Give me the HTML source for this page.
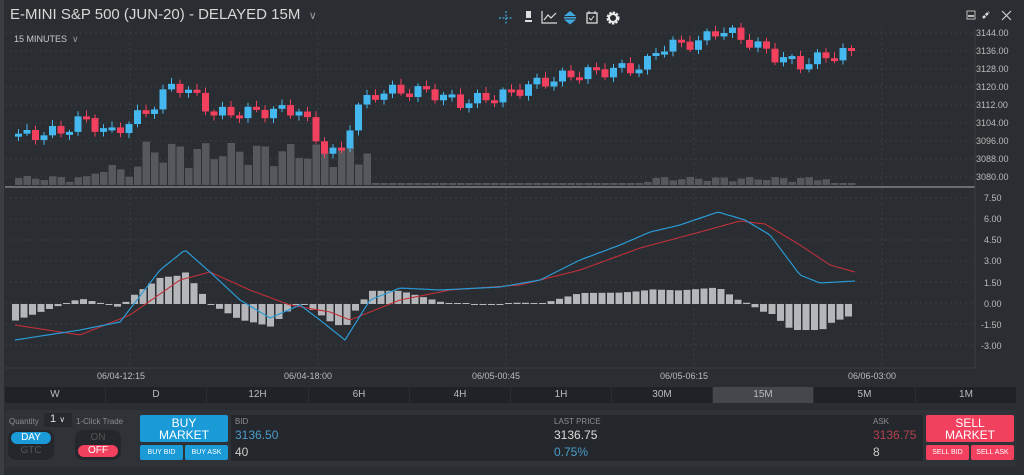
<!DOCTYPE html>
<html><head><meta charset="utf-8"><style>
*{margin:0;padding:0;box-sizing:border-box}
body{width:1024px;height:475px;background:#2a2d31;font-family:"Liberation Sans",sans-serif;color:#ccc;position:relative;overflow:hidden}
.a{position:absolute}
.tf{position:absolute;top:387px;height:16px;background:#1f2226;color:#bbb;font-size:10px;text-align:center;line-height:16px}
.btn{position:absolute;border-radius:2px;color:#fff;text-align:center}
.lbl{font-size:8px;color:#8a8d92}
</style></head><body>
<div class="a" style="left:0;top:0;width:4px;height:475px;background:#3a3d42"></div>
<div class="a" style="left:10px;top:6px;font-size:15px;color:#d8d8d8">E-MINI S&amp;P 500 (JUN-20) - DELAYED 15M &nbsp;<span style="font-size:11px;color:#999">∨</span></div>
<div class="a" style="left:14px;top:34px;font-size:9px;color:#ccc">15 MINUTES &nbsp;<span style="color:#999">∨</span></div>
<svg class="a" style="left:0;top:0" width="1024" height="475" id="s">
<g stroke="#3fa9e0" fill="none" stroke-width="1.2"><path d="M499 18h14M506 11v14" stroke-dasharray="2 1.5"/></g>
<g fill="#ddd"><rect x="526" y="11" width="5" height="7"/><rect x="525" y="20" width="7" height="2"/></g>
<path d="M542 11v12h15M544 20l4-5 3 3 5-5" stroke="#ddd" fill="none" stroke-width="1.2"/>
<g fill="#3fa9e0"><path d="M564 16l6-5 6 5z"/><rect x="564" y="17" width="12" height="1.5"/><path d="M564 19.5l6 5 6-5z"/></g>
<rect x="587" y="13" width="10" height="10" fill="none" stroke="#ddd" stroke-width="1.3"/><path d="M589 11v3M595 11v3M589 18l2 2 3-4" stroke="#ddd" fill="none"/>
<circle cx="613" cy="18" r="5" fill="none" stroke="#eee" stroke-width="3" stroke-dasharray="2.2 1.1"/><circle cx="613" cy="18" r="4" fill="none" stroke="#eee" stroke-width="2"/>
<rect x="967" y="11" width="8" height="8" fill="none" stroke="#bbb"/><rect x="968" y="15" width="6" height="2" fill="#bbb"/>
<path d="M983 18l6-6" stroke="#ddd" stroke-width="2.5" stroke-dasharray="3 1"/>
<path d="M1002 11l9 9M1011 11l-9 9" stroke="#ccc" stroke-width="1.2"/>
<g id="grid" stroke="#3a3d42" stroke-dasharray="2 3"></g>
<line x1="5" y1="187" x2="975" y2="187" stroke="#6a6d72" stroke-width="2"/>
<line x1="5" y1="368" x2="975" y2="368" stroke="#3a3d42"/>
<line x1="975" y1="28" x2="975" y2="368" stroke="#3a3d42"/>
<g id="vol" fill="#55585c"></g>
<g id="cdl"></g>
<g id="hist" fill="#b4b6b9"></g>
<polyline id="sig" fill="none" stroke="#c0303a" stroke-width="1.1"/>
<polyline id="mac" fill="none" stroke="#2a9bd6" stroke-width="1.2"/>
<g font-size="9" fill="#bbb" font-family="Liberation Sans">
<text x="976" y="36">3144.00</text><text x="976" y="54">3136.00</text><text x="976" y="72">3128.00</text><text x="976" y="90">3120.00</text><text x="976" y="108">3112.00</text><text x="976" y="126">3104.00</text><text x="976" y="144">3096.00</text><text x="976" y="162">3088.00</text><text x="976" y="180">3080.00</text>
<text x="984" y="201">7.50</text><text x="984" y="222">6.00</text><text x="984" y="243">4.50</text><text x="984" y="264">3.00</text><text x="984" y="286">1.50</text><text x="984" y="307">0.00</text><text x="981" y="328">-1.50</text><text x="981" y="349">-3.00</text>
<text x="97" y="379">06/04-12:15</text><text x="284" y="379">06/04-18:00</text><text x="472" y="379">06/05-00:45</text><text x="660" y="379">06/05-06:15</text><text x="848" y="379">06/06-03:00</text>
</g>
</svg>
<div class="tf" style="left:5px;width:100px">W</div>
<div class="tf" style="left:106px;width:100px">D</div>
<div class="tf" style="left:207px;width:101px">12H</div>
<div class="tf" style="left:309px;width:100px">6H</div>
<div class="tf" style="left:410px;width:100px">4H</div>
<div class="tf" style="left:511px;width:100px">1H</div>
<div class="tf" style="left:612px;width:100px">30M</div>
<div class="tf" style="left:713px;width:100px;background:#44474c">15M</div>
<div class="tf" style="left:814px;width:101px">5M</div>
<div class="tf" style="left:916px;width:100px">1M</div>
<div class="a" style="left:5px;top:410px;width:1011px;height:57px;background:#2f3237"></div>
<div class="a lbl" style="left:9px;top:417px">Quantity</div>
<div class="a" style="left:44px;top:413px;width:28px;height:14px;background:#25282c;font-size:11px;color:#ddd;padding-left:6px">1 <span style="font-size:8px">∨</span></div>
<div class="a lbl" style="left:76px;top:417px">1-Click Trade</div>
<div class="a" style="left:8px;top:430px;width:46px;height:30px;background:#24272b;border-radius:8px"></div>
<div class="a" style="left:11px;top:432px;width:40px;height:12px;background:#1b9ad8;border-radius:6px;font-size:10px;color:#fff;text-align:center;line-height:12px">DAY</div>
<div class="a" style="left:11px;top:445px;width:40px;height:12px;font-size:10px;color:#555;text-align:center;line-height:12px">GTC</div>
<div class="a" style="left:75px;top:430px;width:46px;height:30px;background:#24272b;border-radius:8px"></div>
<div class="a" style="left:78px;top:432px;width:40px;height:12px;font-size:10px;color:#555;text-align:center;line-height:12px">ON</div>
<div class="a" style="left:78px;top:445px;width:40px;height:12px;background:#f2405f;border-radius:6px;font-size:10px;color:#fff;text-align:center;line-height:12px">OFF</div>
<div class="btn" style="left:140px;top:415px;width:88px;height:27px;background:#1b9ad8;font-size:12px;line-height:12px;padding-top:2px">BUY<br>MARKET</div>
<div class="btn" style="left:140px;top:445px;width:43px;height:15px;background:#1b9ad8;font-size:7px;line-height:15px">BUY BID</div>
<div class="btn" style="left:185px;top:445px;width:43px;height:15px;background:#1b9ad8;font-size:7px;line-height:15px">BUY ASK</div>
<div class="a" style="left:231px;top:415px;width:692px;height:46px;background:#24272b"></div>
<div class="a lbl" style="left:235px;top:417px">BID</div>
<div class="a" style="left:235px;top:428px;font-size:12px;color:#4a9ccc">3136.50</div>
<div class="a" style="left:235px;top:445px;font-size:12px;color:#ccc">40</div>
<div class="a lbl" style="left:554px;top:417px">LAST PRICE</div>
<div class="a" style="left:554px;top:428px;font-size:12px;color:#ddd">3136.75</div>
<div class="a" style="left:554px;top:445px;font-size:12px;color:#4a9ccc">0.75%</div>
<div class="a lbl" style="left:873px;top:417px">ASK</div>
<div class="a" style="left:873px;top:428px;font-size:12px;color:#b5424f">3136.75</div>
<div class="a" style="left:873px;top:445px;font-size:12px;color:#ccc">8</div>
<div class="btn" style="left:926px;top:415px;width:88px;height:27px;background:#f2405f;font-size:12px;line-height:12px;padding-top:2px">SELL<br>MARKET</div>
<div class="btn" style="left:926px;top:445px;width:43px;height:15px;background:#f2405f;font-size:7px;line-height:15px">SELL BID</div>
<div class="btn" style="left:971px;top:445px;width:43px;height:15px;background:#f2405f;font-size:7px;line-height:15px">SELL ASK</div>
<script>
var N='http://www.w3.org/2000/svg';
function el(p,t,a){var e=document.createElementNS(N,t);for(var k in a)e.setAttribute(k,a[k]);document.getElementById(p).appendChild(e);return e}
for(var y=36;y<=180;y+=18)el('grid','line',{x1:5,y1:y-3,x2:975,y2:y-3});
for(var y=198;y<=350;y+=21)el('grid','line',{x1:5,y1:y,x2:975,y2:y});
[130,318,506,694,882].forEach(function(x){el('grid','line',{x1:x,y1:28,x2:x,y2:368})});
function interp(pts,x){for(var i=0;i<pts.length-1;i++){if(x<=pts[i+1][0]){var a=pts[i],b=pts[i+1];return a[1]+(b[1]-a[1])*(x-a[0])/(b[0]-a[0])}}return pts[pts.length-1][1]}
var P=[[15,3098],[60,3100],[85,3106],[110,3099],[150,3110],[175,3122],[195,3116],[215,3108],[260,3109],[300,3110],[320,3094],[340,3089],[355,3110],[380,3118],[430,3118],[460,3113],[500,3116],[540,3122],[580,3126],[620,3128],[645,3129],[660,3138],[700,3140],[720,3146],[750,3140],[775,3134],[800,3130],[830,3134],[856,3136]];
function py(p){return 33+(3144-p)*2.25}
var prev=interp(P,15);
for(var x=15;x<=856;x+=8.5){var c=interp(P,x+4)+Math.sin(x*1.7)*3;var o=prev;var up=c>=o;var col=up?'#45b8f0':'#f2405f';
var t=py(Math.max(o,c)),b=py(Math.min(o,c));if(b-t<3)b=t+3;
el('cdl','line',{x1:x+3.5,x2:x+3.5,y1:t-2-Math.abs(Math.sin(x))*4,y2:b+2+Math.abs(Math.cos(x))*3,stroke:col});
el('cdl','rect',{x:x,y:t,width:7,height:b-t,fill:col});prev=c;
var v=(x>140&&x<365)?15+Math.abs(Math.sin(x*0.37)*Math.cos(x*0.11))*45:(x<100?3+Math.abs(Math.sin(x))*6:(x>640&&x<830?3+Math.abs(Math.sin(x))*5:2));
if(x>85&&x<140)v=6+Math.abs(Math.sin(x))*14;
el('vol','rect',{x:x,y:185-v,width:7.5,height:v});}
var M=[[15,340],[80,330],[120,322],[160,270],[185,250],[210,272],[240,300],[270,318],[300,305],[320,320],[345,340],[370,300],[400,288],[440,290],[500,287],[540,280],[580,260],[620,245],[650,232],[680,225],[718,212],[745,220],[770,235],[800,275],[820,283],[855,281]];
var S=[[15,325],[80,335],[130,315],[180,280],[210,272],[250,290],[290,305],[330,312],[350,320],[400,300],[450,290],[520,285],[580,270],[640,248],[700,232],[740,221],[765,224],[800,245],[830,265],[855,272]];
function pl(id,pts){var s='';for(var x=15;x<=855;x+=3)s+=x+','+interp(pts,x).toFixed(1)+' ';document.getElementById(id).setAttribute('points',s)}
pl('sig',S);pl('mac',M);
for(var x=12;x<=852;x+=8.5){var d=(interp(S,x+3)-interp(M,x+3))*1.1;d=Math.max(-26,Math.min(34,d));
if(Math.abs(d)<1)d=d<0?-1:1;el('hist','rect',{x:x,y:d>0?304-d:304,width:7,height:Math.abs(d)})}
</script>
</body></html>
